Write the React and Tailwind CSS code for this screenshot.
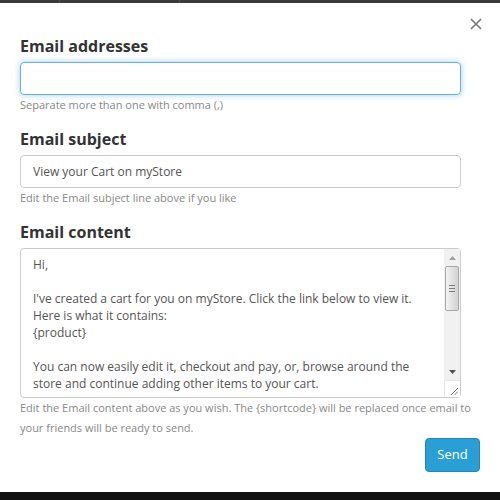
import React from "react";

const content = `Hi,

I've created a cart for you on myStore. Click the link below to view it.
Here is what it contains:
{product}

You can now easily edit it, checkout and pay, or, browse around the
store and continue adding other items to your cart.

Thanks!`;

function FakeScrollbar() {
  return (
    <div className="absolute right-[1px] top-[1px] bottom-[1px] w-[16px] flex flex-col">
      <div className="flex-1 bg-[#f1f1f1] flex flex-col items-center">
        <div className="h-[17px] flex items-center justify-center">
          <svg width="7" height="4" viewBox="0 0 7 4"><path d="M3.5 0 L7 4 L0 4 Z" fill="#a3a3a3" /></svg>
        </div>
        <div className="w-[14px] h-[45px] rounded-[2px] border border-[#a8a8a8] bg-gradient-to-r from-[#f4f4f4] via-[#e2e2e2] to-[#d2d2d2] flex flex-col items-center justify-center gap-[2px]">
          <div className="w-[6px] h-[1px] bg-[#7a7a7a]" />
          <div className="w-[6px] h-[1px] bg-[#7a7a7a]" />
          <div className="w-[6px] h-[1px] bg-[#7a7a7a]" />
        </div>
        <div className="flex-1" />
        <div className="h-[17px] flex items-center justify-center">
          <svg width="7" height="4" viewBox="0 0 7 4"><path d="M0 0 L7 0 L3.5 4 Z" fill="#505050" /></svg>
        </div>
      </div>
      <div className="h-[17px] bg-white border-l border-t border-[#e6e6e6] flex items-end justify-end p-[2px]">
        <svg width="8" height="8" viewBox="0 0 8 8" stroke="#777" strokeWidth="1" fill="none">
          <path d="M1 8 L8 1 M4.5 8 L8 4.5" />
        </svg>
      </div>
    </div>
  );
}

export default function App() {
  return (
    <div
      className="w-[500px] h-[500px] bg-white flex flex-col overflow-hidden"
      style={{ fontFamily: '"Open Sans", "Noto Sans", sans-serif' }}
    >
      <div className="h-[3px] bg-[#3a3a3a] shrink-0 flex">
        <div className="w-[60px] border-r border-[#4a4a4a]" />
        <div className="w-[120px] border-r border-[#4a4a4a]" />
      </div>
      <div className="flex-1 relative px-[20px]">
        <button className="absolute right-[16px] top-[13px] w-[16px] h-[16px] flex items-center justify-center text-[#777]">
          <svg width="12" height="12" viewBox="0 0 12 12" stroke="currentColor" strokeWidth="1.6" fill="none">
            <path d="M1 1 L11 11 M11 1 L1 11" />
          </svg>
        </button>
        <div className="pt-[32px]">
          <h3 className="text-[16px] leading-[22px] font-bold text-[#333]">Email addresses</h3>
          <input
            className="mt-[5px] block w-[441px] h-[33px] rounded-[4px] border border-[#66afe9] shadow-[0_0_6px_rgba(102,175,233,0.6)] outline-none px-[12px] text-[12px]"
          />
          <p className="mt-[2px] text-[11px] leading-[16px] text-[#888]">Separate more than one with comma (,)</p>

          <h3 className="mt-[15px] text-[16px] leading-[22px] font-bold text-[#333]">Email subject</h3>
          <input
            defaultValue="View your Cart on myStore"
            className="mt-[5px] block w-[441px] h-[33px] rounded-[4px] border border-[#ccc] outline-none px-[12px] text-[12px] text-[#555]"
          />
          <p className="mt-[2px] text-[11px] leading-[16px] text-[#888]">Edit the Email subject line above if you like</p>

          <h3 className="mt-[15px] text-[16px] leading-[22px] font-bold text-[#333]">Email content</h3>
          <div className="relative mt-[5px] w-[441px] h-[150px]">
            <textarea
              defaultValue={content}
              className="block w-full h-full rounded-[4px] border border-[#ccc] outline-none pl-[12px] pr-[24px] pt-[7px] pb-[4px] text-[12px] leading-[17px] text-[#555] resize-none overflow-hidden"
            />
            <FakeScrollbar />
          </div>
          <p className="text-[11px] leading-[20px] text-[#888] w-[460px]">
            Edit the Email content above as you wish. The {"{shortcode}"} will be replaced once email to your friends will be ready to send.
          </p>
          <div className="flex justify-end w-[460px]">
            <button className="w-[55px] h-[34px] rounded-[4px] bg-[#2a9fd6] border border-[#2386b8] text-white text-[13px]">
              Send
            </button>
          </div>
        </div>
      </div>
      <div className="h-[8px] bg-[#111] shrink-0" />
    </div>
  );
}
